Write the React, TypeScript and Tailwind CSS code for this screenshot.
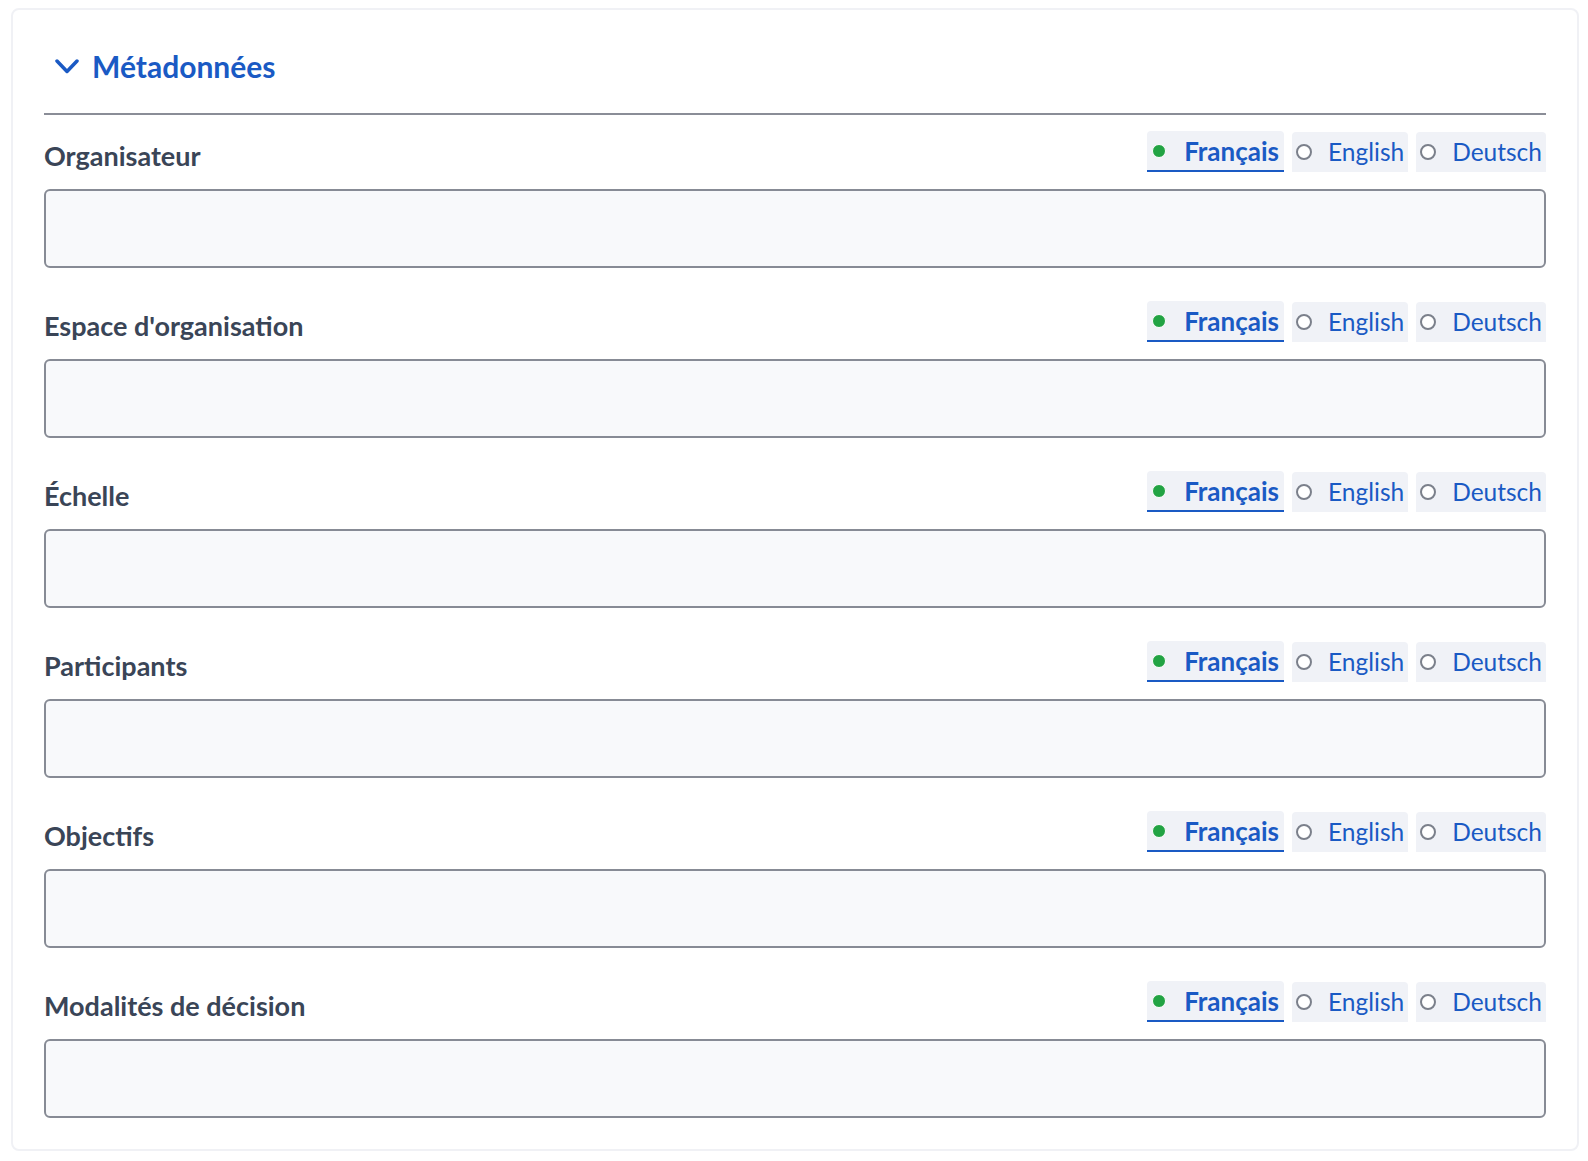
import { useState } from 'react';

const FIELDS = [
  'Organisateur',
  "Espace d'organisation",
  'Échelle',
  'Participants',
  'Objectifs',
  'Modalités de décision',
];

const LANGS = [
  { code: 'fr', label: 'Français' },
  { code: 'en', label: 'English' },
  { code: 'de', label: 'Deutsch' },
];

function LangTabs() {
  const [active, setActive] = useState('fr');
  return (
    <div className="flex items-end gap-2">
      {LANGS.map((l) => {
        const on = l.code === active;
        return (
          <button
            key={l.code}
            onClick={() => setActive(l.code)}
            className={
              on
                ? 'flex h-[41px] items-center gap-[18px] rounded-t bg-[#f0f2f7] pl-[5px] pr-[5px] border-b-2 border-[#1a5ac4]'
                : 'flex h-[40px] items-center gap-[16px] rounded-t bg-[#f0f2f7] pl-[4px] pr-[4px] pb-[1px]'
            }
          >
            {on ? (
              <span className="block h-[14px] w-[14px] rounded-full border border-white bg-[#22a343]" />
            ) : (
              <span className="block h-[16px] w-[16px] rounded-full border-2 border-[#7b808b] bg-white" />
            )}
            <span
              className={
                on
                  ? 'text-[26px] leading-[30px] font-bold text-[#1a5ac4]'
                  : 'text-[24.5px] leading-[30px] text-[#1a5ac4]'
              }
            >
              {l.label}
            </span>
          </button>
        );
      })}
    </div>
  );
}

export default function App() {
  return (
    <div className="bg-white pt-2 pl-[11px]" style={{ fontFamily: 'Lato, "Noto Sans", sans-serif' }}>
      <div className="w-[1568px] rounded-lg border-2 border-[#f0f1f5] px-[31px] pb-[31px]">
        <div className="flex items-center gap-[13px] pt-[36px] pb-[27px] pl-[11px]">
          <svg width="24" height="15" viewBox="0 0 24 15" fill="none">
            <polyline points="2,2 12,12.5 22,2" stroke="#1a5ac4" strokeWidth="3.5" strokeLinecap="round" strokeLinejoin="round" />
          </svg>
          <h2 className="text-[30px] leading-[40px] font-bold text-[#1a5ac4]">Métadonnées</h2>
        </div>
        <div className="h-[2px] bg-[#8a8d97]" />
        <div className="space-y-[33px] pt-4">
          {FIELDS.map((f) => (
            <div key={f}>
              <div className="flex items-end justify-between">
                <label className="text-[27px] leading-[1.2] font-bold text-[#3a4557]">{f}</label>
                <LangTabs />
              </div>
              <input className="mt-[17px] block h-[79px] w-full rounded-md border-2 border-[#878b95] bg-[#f8f9fb] px-4 text-[24px] outline-none" />
            </div>
          ))}
        </div>
      </div>
    </div>
  );
}
